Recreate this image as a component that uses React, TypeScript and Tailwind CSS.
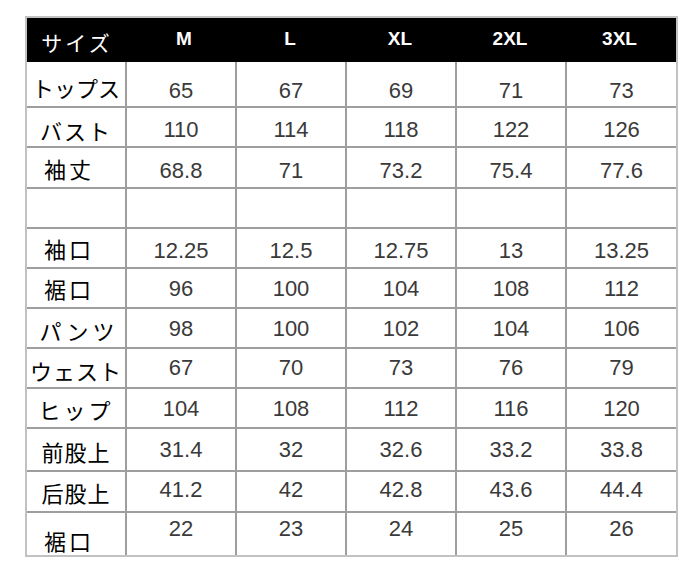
import React from 'react'

type Row = {
    label: string
    values: string[]
    h: string
    labelCls: string
    numCls: string
}

const sizes = ['M', 'L', 'XL', '2XL', '3XL']

const rows: Row[] = [
    { label: 'トップス', values: ['65', '67', '69', '71', '73'], h: 'h-[46px]', labelCls: 'text-[19px] tracking-[0px] pt-[6px]', numCls: 'pt-[14px]' },
    { label: 'バスト', values: ['110', '114', '118', '122', '126'], h: 'h-[40px]', labelCls: 'tracking-[2px] pt-[6px]', numCls: 'pt-[6px]' },
    { label: '袖丈', values: ['68.8', '71', '73.2', '75.4', '77.6'], h: 'h-[41px]', labelCls: 'tracking-[3px] pr-[14px]', numCls: 'pt-[6px]' },
    { label: '', values: ['', '', '', '', ''], h: 'h-[40px]', labelCls: '', numCls: '' },
    { label: '袖口', values: ['12.25', '12.5', '12.75', '13', '13.25'], h: 'h-[40px]', labelCls: 'tracking-[3px] pr-[14px] pt-[0px]', numCls: 'pt-[6px]' },
    { label: '裾口', values: ['96', '100', '104', '108', '112'], h: 'h-[40px]', labelCls: 'tracking-[3px] pr-[14px]', numCls: 'pt-[2px]' },
    { label: 'パンツ', values: ['98', '100', '102', '104', '106'], h: 'h-[40px]', labelCls: 'tracking-[4px] pl-[6px] pt-[4px]', numCls: 'pt-[2px]' },
    { label: 'ウェスト', values: ['67', '70', '73', '76', '79'], h: 'h-[40px]', labelCls: 'tracking-[1px] pt-[4px]', numCls: 'pt-[0px]' },
    { label: 'ヒップ', values: ['104', '108', '112', '116', '120'], h: 'h-[40px]', labelCls: 'tracking-[3px] pt-[2px]', numCls: 'pt-[2px]' },
    { label: '前股上', values: ['31.4', '32', '32.6', '33.2', '33.8'], h: 'h-[43px]', labelCls: 'tracking-[1px] pt-[2px]', numCls: 'pt-[0px]' },
    { label: '后股上', values: ['41.2', '42', '42.8', '43.6', '44.4'], h: 'h-[41px]', labelCls: 'tracking-[1px]', numCls: 'pb-[4px]' },
    { label: '裾口', values: ['22', '23', '24', '25', '26'], h: 'h-[42px]', labelCls: 'tracking-[3px] pr-[14px] pt-[12px]', numCls: 'pb-[10px]' },
]

export default function App() {
    return (
        <div className="w-[700px] h-[569px] bg-white pt-[16px] pl-[25px]">
            <div className="w-[653px] border-2 border-[#c2c2c2]">
                <div className="grid grid-cols-[100px_110px_110px_110px_110px_109px]">
                    <div className="h-[44px] bg-black flex items-center justify-center pt-[6px] text-white text-[21px] tracking-[3px] font-['Noto_Sans_CJK_JP',sans-serif]">
                        サイズ
                    </div>
                    {sizes.map((s, i) => (
                        <div
                            key={s}
                            className={`h-[44px] bg-black flex items-center justify-center pb-[2px] text-white text-[19px] font-bold font-['Liberation_Sans',Arial,sans-serif] ${
                                i === 0 ? 'pl-[4px]' : 'pr-[4px]'
                            }`}
                        >
                            {s}
                        </div>
                    ))}
                    {rows.map((row, ri) => {
                        const last = ri === rows.length - 1
                        const bb = last ? '' : 'border-b-2'
                        return (
                            <React.Fragment key={ri}>
                                <div
                                    className={`${row.h} ${bb} border-r-2 border-[#9e9e9e] flex items-center justify-center text-black text-[22px] leading-none whitespace-nowrap font-['Noto_Sans_CJK_JP',sans-serif] ${row.labelCls}`}
                                >
                                    {row.label}
                                </div>
                                {row.values.map((v, vi) => (
                                    <div
                                        key={vi}
                                        className={`${row.h} ${bb} ${vi === 4 ? '' : 'border-r-2'} border-[#9e9e9e] flex items-center justify-center text-[#3a3a3a] text-[22px] leading-none font-['Liberation_Sans',Arial,sans-serif] ${row.numCls}`}
                                    >
                                        {v}
                                    </div>
                                ))}
                            </React.Fragment>
                        )
                    })}
                </div>
            </div>
        </div>
    )
}
